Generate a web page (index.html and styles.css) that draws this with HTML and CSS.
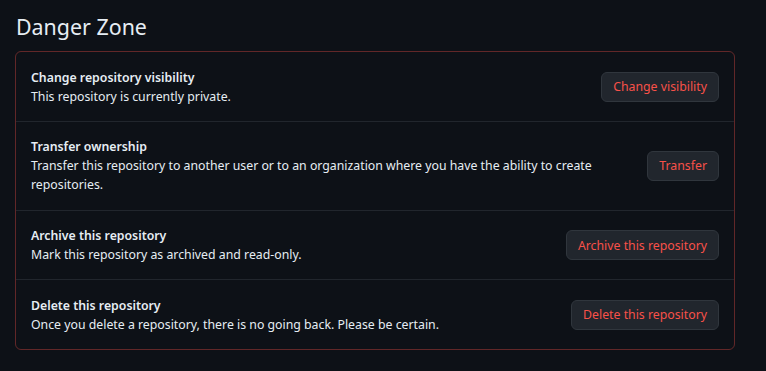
FILE: index.html
```html
<!DOCTYPE html>
<html lang="en">
<head>
<meta charset="utf-8">
<title>Danger Zone</title>
<link rel="stylesheet" href="styles.css">
</head>
<body>
<main class="page">
  <h2 class="heading">Danger Zone</h2>
  <div class="danger-box">
    <div class="row">
      <div class="info">
        <div class="title">Change repository visibility</div>
        <div class="desc">This repository is currently private.</div>
      </div>
      <button class="btn">Change visibility</button>
    </div>
    <div class="row">
      <div class="info">
        <div class="title">Transfer ownership</div>
        <div class="desc">Transfer this repository to another user or to an organization where you have the ability to create repositories.</div>
      </div>
      <button class="btn">Transfer</button>
    </div>
    <div class="row">
      <div class="info">
        <div class="title">Archive this repository</div>
        <div class="desc">Mark this repository as archived and read-only.</div>
      </div>
      <button class="btn">Archive this repository</button>
    </div>
    <div class="row">
      <div class="info">
        <div class="title">Delete this repository</div>
        <div class="desc">Once you delete a repository, there is no going back. Please be certain.</div>
      </div>
      <button class="btn">Delete this repository</button>
    </div>
  </div>
</main>
</body>
</html>
```

FILE: styles.css
```css
html, body {
  margin: 0;
  padding: 0;
  background: #0d1117;
}
body {
  font-family: "Noto Sans", "Open Sans", sans-serif;
  color: #e6edf3;
  font-size: 12.3px;
}
.page {
  padding: 12px 31px 0 15px;
}
.heading {
  margin: 0 0 9px 1px;
  font-size: 21.4px;
  font-weight: 400;
  line-height: 30px;
  color: #e6edf3;
}
.danger-box {
  border: 1px solid rgba(248, 81, 73, 0.36);
  border-radius: 6px;
}
.row {
  display: flex;
  align-items: center;
  justify-content: space-between;
  gap: 40px;
  padding: 15.5px 15px 15.3px 15px;
  border-top: 1px solid #21262d;
}
.row:first-child {
  border-top: none;
}
.info {
  flex: 1;
  min-width: 0;
}
.title {
  font-weight: 600;
  line-height: 19px;
}
.desc {
  line-height: 19px;
}
.btn {
  flex: none;
  height: 30px;
  padding: 0 11px;
  font-family: inherit;
  font-size: 12.3px;
  color: #f85149;
  background: #21262d;
  border: 1px solid #30363d;
  border-radius: 6px;
}
```
